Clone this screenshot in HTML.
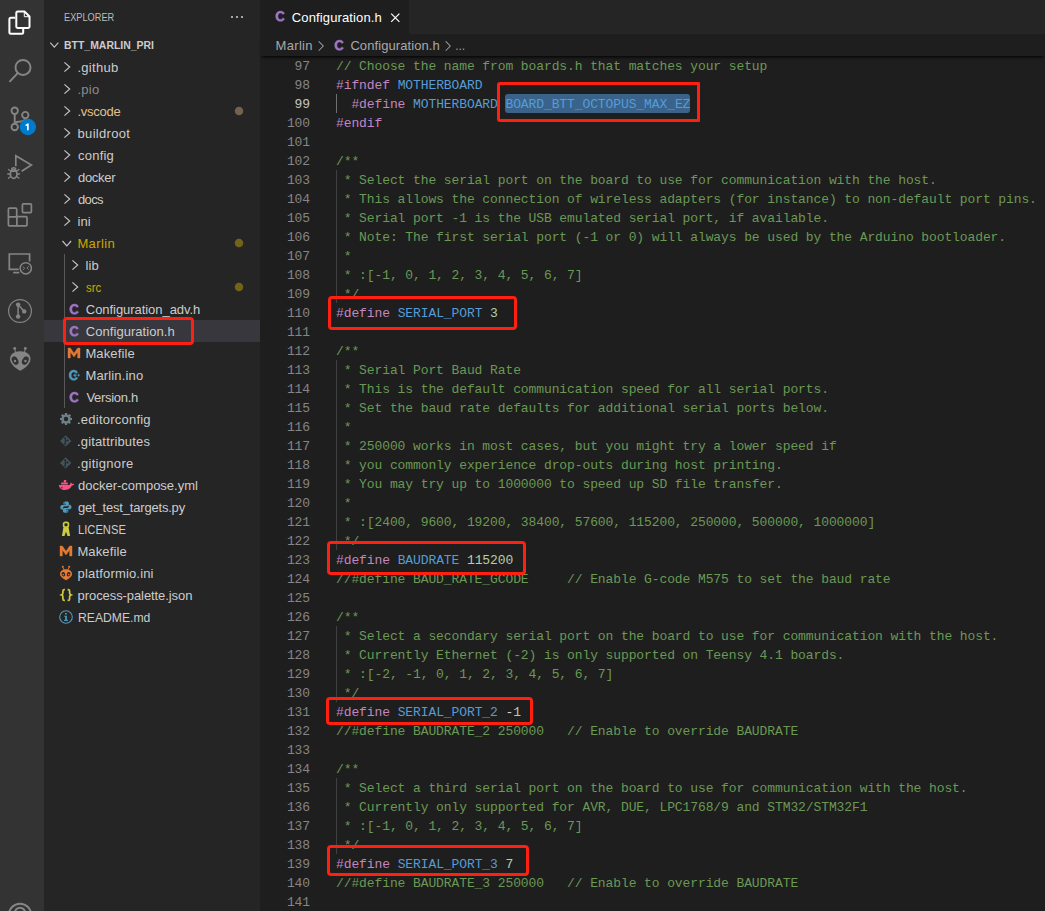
<!DOCTYPE html>
<html><head><meta charset="utf-8"><title>Configuration.h</title>
<style>
*{box-sizing:border-box;margin:0;padding:0}
html,body{width:1045px;height:911px;overflow:hidden;background:#1e1e1e}
body{position:relative;font-family:"Liberation Sans",sans-serif;font-size:13px;color:#cccccc}
.act{position:absolute;left:0;top:0;width:44px;height:911px;background:#333333}
.act svg{position:absolute;left:0;top:0}
.side{position:absolute;left:44px;top:0;width:216px;height:911px;background:#252526;overflow:hidden}
.hdr{position:absolute;left:19.500px;top:10px;font-size:11px;line-height:14px;color:#bbbbbb;white-space:nowrap;transform:scaleX(0.838);transform-origin:0 50%}
.more{position:absolute;left:185px;top:9px;width:16px;height:16px}
.row{position:absolute;left:0;width:216px;height:22px;line-height:22px;white-space:nowrap}
.row.selrow{background:#37373d}
.lbl{position:absolute;top:1px;color:#cccccc;font-size:13px;display:inline-block}
.lbl.root{font-weight:bold;font-size:11px;letter-spacing:0;color:#cccccc;top:0}
.lbl.dim{color:#8c8c8c}
.lbl.mod{color:#e2c08d}
.lbl.mod2{color:#cca700}
.ic{position:absolute;top:3px;width:16px;height:16px}
.ic svg{display:block;width:16px;height:16px}
.dot{position:absolute;left:186px;top:2px;width:18px;height:18px}
.guide{position:absolute;left:20px;top:254px;width:1px;height:154px;background:#585858}
.tabs{position:absolute;left:260px;top:0;width:785px;height:34px;background:#252526}
.tab{position:absolute;left:0;top:0;width:149px;height:34px;background:#1e1e1e}
.tab .tt{position:absolute;left:31.800px;top:0;line-height:35px;color:#ffffff;font-size:13px;letter-spacing:0.13px;white-space:nowrap}
.bc{position:absolute;left:260px;top:34px;width:785px;height:22px;background:#1e1e1e;line-height:22px;color:#a9a9a9;white-space:nowrap;box-shadow:0 3px 3px -2px #000}
.bc span{position:absolute;top:1px;letter-spacing:0.08px}
.ed{position:absolute;left:0;top:0;width:1045px;height:911px;pointer-events:none}
.ln,.cl{position:absolute;height:19px;line-height:19px;font-family:"Liberation Mono",monospace;font-size:13px;white-space:pre}
.ln{left:260px;width:50px;text-align:right;color:#858585;letter-spacing:-0.1px}
.ln.cur{color:#c6c6c6}
.cl{left:336px;color:#d4d4d4;letter-spacing:-0.1px}
.c{color:#6a9955}.p{color:#c586c0}.b{color:#569cd6}.n{color:#b5cea8}.w{color:#d4d4d4}
.sel{color:#569cd6;position:relative;display:inline-block;height:19px;line-height:19px}
.sel::before{content:'';position:absolute;left:-0.4px;right:-0.2px;top:-1px;height:19px;background:#3a638c;border-radius:3px;z-index:-1}
.ed{z-index:0}
.ig{position:absolute;left:336px;width:1px;height:19px;background:#404040}
.ig.ga{background:#707070}
.rb{position:absolute;border:3px solid #ff2011}
</style></head><body>
<div class="act">
<svg width="44" height="911" viewBox="0 0 44 911" fill="none" stroke-linecap="butt" stroke-linejoin="round">
<!-- files (active, white) -->
<g stroke="#ffffff" stroke-width="2">
<path d="M17.800 11.500H24.500L29.500 16.500V26.500a1.500 1.500 0 0 1 -1.500 1.500H17.800a1.500 1.500 0 0 1 -1.500 -1.500V13a1.500 1.500 0 0 1 1.500 -1.500z"/>
<path d="M15.300 17.800H10.900a1.500 1.500 0 0 0 -1.500 1.500V32.200a1.500 1.500 0 0 0 1.500 1.500H21.700a1.500 1.500 0 0 0 1.500 -1.500V29"/>
</g>
<path d="M24.300 11.800V16.700H29.300" stroke="#ffffff" stroke-width="1"/>
<!-- search -->
<g stroke="#858585" stroke-width="2">
<circle cx="23" cy="67.400" r="7.500"/>
<path d="M17.900 72.900L9.500 81.900"/>
</g>
<!-- source control -->
<g stroke="#858585" stroke-width="1.900">
<circle cx="14.700" cy="110.700" r="3.200"/>
<circle cx="14.700" cy="127" r="3.200"/>
<circle cx="25.300" cy="115.100" r="3.200"/>
<path d="M14.700 113.700V124"/>
<path d="M25.300 118.100c0 3.200 -3.600 3.600 -6.600 3.600c-2.400 0 -4 .8 -4 2.600"/>
</g>
<circle cx="27.900" cy="127" r="8.200" fill="#007acc"/>
<path d="M28.700 123.400v6.800h-1.700v-4.800l-1.500.8v-1.500l1.900-1.300z" fill="#ffffff"/>
<!-- run and debug -->
<g stroke="#858585" stroke-width="1.700">
<path d="M15.800 166.200V155.700L31.400 165L21.600 171.200" stroke-linejoin="miter"/>
<ellipse cx="13.700" cy="174" rx="3.300" ry="4.300"/>
<path d="M10.600 171.200h6.200" />
<path d="M10.400 174H7.300M17 174h3.100M10.700 176.600L8 178.600M16.700 176.600l2.700 2M10.900 171.300L8.100 169.200M16.500 171.300l2.800-2.100" stroke-width="1.300"/>
<path d="M11.600 169.800a2.100 2.100 0 0 1 4.200 0" stroke-width="1.400"/>
</g>
<!-- extensions -->
<g stroke="#858585" stroke-width="1.700">
<path d="M9.400 208.200H15.700a1 1 0 0 1 1 1V216.700H26a1 1 0 0 1 1 1V224.800a1 1 0 0 1 -1 1H9.400a1 1 0 0 1 -1 -1V209.200a1 1 0 0 1 1 -1z"/>
<path d="M8.400 216.900H16.700M16.900 216.700V225.800"/>
<rect x="22.400" y="203.800" width="9" height="8.800" rx="1"/>
</g>
<!-- remote explorer -->
<g stroke="#858585" stroke-width="1.700" stroke-linejoin="miter">
<path d="M29.600 261.500V254H9.300V269.300H18.700"/>
<path d="M13.200 272.600H19.300"/>
<circle cx="25.800" cy="268.300" r="5.600" stroke-width="1.500"/>
<path d="M22.900 266.600l1.700 1.700-1.700 1.700M28.700 266.200l-1.700 1.700 1.700 1.700" stroke-width="1"/>
</g>
<!-- git graph -->
<circle cx="20" cy="311" r="11.400" stroke="#858585" stroke-width="1.200"/>
<path d="M18.100 304.600V316.600M18.100 304.600L24.200 311.400" stroke="#858585" stroke-width="1.500"/>
<circle cx="18.100" cy="304.600" r="2.200" fill="#858585"/><circle cx="18.100" cy="316.600" r="2.200" fill="#858585"/><circle cx="24.200" cy="311.400" r="2.200" fill="#858585"/>
<!-- platformio alien -->
<g fill="#858585">
<circle cx="14.700" cy="348.500" r="1.400"/><circle cx="25.300" cy="348.500" r="1.400"/>
<path d="M14.500 348.700l1.300 4.300M25.500 348.700l-1.300 4.300" stroke="#858585" stroke-width="1"/>
<path d="M20.200 351.200c6.400 0 10.300 3.300 10.300 7.800 0 4.600 -5.300 9.300 -10.300 11.700 -5 -2.400 -10.200 -7.100 -10.200 -11.700 0 -4.500 3.800 -7.800 10.200 -7.800z"/>
</g>
<ellipse cx="15.100" cy="360.600" rx="3" ry="4.500" transform="rotate(-28 15.100 360.600)" fill="#333333"/>
<ellipse cx="25.300" cy="360.600" rx="3" ry="4.500" transform="rotate(28 25.300 360.600)" fill="#333333"/>
<circle cx="15" cy="361" r="1.200" fill="#858585"/><circle cx="25.400" cy="361" r="1.200" fill="#858585"/>
<!-- account (cropped) -->
<g stroke="#858585" stroke-width="2">
<circle cx="20" cy="915" r="11.200"/>
<circle cx="20" cy="913" r="5.200"/>
</g>
</svg>

</div>
<div class="side">
<div class="hdr">EXPLORER</div>
<svg class="more" viewBox="0 0 16 16"><circle cx="3" cy="8" r="1.100" fill="#c5c5c5"/><circle cx="8" cy="8" r="1.100" fill="#c5c5c5"/><circle cx="13" cy="8" r="1.100" fill="#c5c5c5"/></svg>
<div class="row" style="top:34px"><span class="ic" style="left:2.600px;top:3.400px;width:15px;height:15px"><svg class="chev" style="width:15px;height:15px" viewBox="0 0 16 16"><path d="M3.500 6L7.800 10.900 12.100 6" stroke="#c5c5c5" stroke-width="1.150" fill="none"/></svg></span><span class="lbl root" style="left:20px;letter-spacing:0px;transform:scaleX(0.95);transform-origin:0 50%">BTT_MARLIN_PRI</span></div><div class="row" style="top:56px"><span class="ic" style="left:15px"><svg class="chev" viewBox="0 0 16 16"><path d="M5.400 3.400L10.700 8 5.400 12.600" stroke="#c5c5c5" stroke-width="1.150" fill="none"/></svg></span><span class="lbl " style="left:33.4px;letter-spacing:0.3px">.github</span></div><div class="row" style="top:78px"><span class="ic" style="left:15px"><svg class="chev" viewBox="0 0 16 16"><path d="M5.400 3.400L10.700 8 5.400 12.600" stroke="#c5c5c5" stroke-width="1.150" fill="none"/></svg></span><span class="lbl dim" style="left:33.4px;letter-spacing:0.29px">.pio</span></div><div class="row" style="top:100px"><span class="ic" style="left:15px"><svg class="chev" viewBox="0 0 16 16"><path d="M5.400 3.400L10.700 8 5.400 12.600" stroke="#c5c5c5" stroke-width="1.150" fill="none"/></svg></span><span class="lbl mod" style="left:33.4px;letter-spacing:-0.23px">.vscode</span><svg class="dot" viewBox="0 0 18 18"><circle cx="9" cy="9" r="4.250" fill="#716350"/></svg></div><div class="row" style="top:122px"><span class="ic" style="left:15px"><svg class="chev" viewBox="0 0 16 16"><path d="M5.400 3.400L10.700 8 5.400 12.600" stroke="#c5c5c5" stroke-width="1.150" fill="none"/></svg></span><span class="lbl " style="left:33.6px;letter-spacing:0.29px">buildroot</span></div><div class="row" style="top:144px"><span class="ic" style="left:15px"><svg class="chev" viewBox="0 0 16 16"><path d="M5.400 3.400L10.700 8 5.400 12.600" stroke="#c5c5c5" stroke-width="1.150" fill="none"/></svg></span><span class="lbl " style="left:34px;letter-spacing:0.23px">config</span></div><div class="row" style="top:166px"><span class="ic" style="left:15px"><svg class="chev" viewBox="0 0 16 16"><path d="M5.400 3.400L10.700 8 5.400 12.600" stroke="#c5c5c5" stroke-width="1.150" fill="none"/></svg></span><span class="lbl " style="left:34px;letter-spacing:-0.3px">docker</span></div><div class="row" style="top:188px"><span class="ic" style="left:15px"><svg class="chev" viewBox="0 0 16 16"><path d="M5.400 3.400L10.700 8 5.400 12.600" stroke="#c5c5c5" stroke-width="1.150" fill="none"/></svg></span><span class="lbl " style="left:34px;letter-spacing:-0.65px">docs</span></div><div class="row" style="top:210px"><span class="ic" style="left:15px"><svg class="chev" viewBox="0 0 16 16"><path d="M5.400 3.400L10.700 8 5.400 12.600" stroke="#c5c5c5" stroke-width="1.150" fill="none"/></svg></span><span class="lbl " style="left:33.6px;letter-spacing:0.04px">ini</span></div><div class="row" style="top:232px"><span class="ic" style="left:15px"><svg class="chev" viewBox="0 0 16 16"><path d="M3.500 6L7.800 10.900 12.100 6" stroke="#c5c5c5" stroke-width="1.150" fill="none"/></svg></span><span class="lbl mod2" style="left:33.4px;letter-spacing:0.37px">Marlin</span><svg class="dot" viewBox="0 0 18 18"><circle cx="9" cy="9" r="4.250" fill="#73631a"/></svg></div><div class="row" style="top:254px"><span class="ic" style="left:23px"><svg class="chev" viewBox="0 0 16 16"><path d="M5.400 3.400L10.700 8 5.400 12.600" stroke="#c5c5c5" stroke-width="1.150" fill="none"/></svg></span><span class="lbl " style="left:41.6px;letter-spacing:0.11px">lib</span></div><div class="row" style="top:276px"><span class="ic" style="left:23px"><svg class="chev" viewBox="0 0 16 16"><path d="M5.400 3.400L10.700 8 5.400 12.600" stroke="#c5c5c5" stroke-width="1.150" fill="none"/></svg></span><span class="lbl mod2" style="left:42.4px;letter-spacing:0px;transform:scaleX(0.875);transform-origin:0 50%">src</span><svg class="dot" viewBox="0 0 18 18"><circle cx="9" cy="9" r="4.250" fill="#73631a"/></svg></div><div class="row" style="top:298px"><span class="ic" style="left:22px"><svg class="fi" viewBox="0 0 16 16"><path d="M12.6 10.9c-.8 1.5-2.3 2.4-4.2 2.4-2.8 0-4.7-2.1-4.7-5.1 0-3 1.900-5.100 4.700-5.100 1.900 0 3.300.8 4.100 2.300l-1.800 1c-.5-.9-1.200-1.400-2.300-1.400-1.500 0-2.500 1.300-2.500 3.200 0 1.900 1 3.200 2.500 3.200 1.100 0 1.900-.5 2.400-1.500z" fill="#a074c4" stroke="#a074c4" stroke-width=".45"/></svg></span><span class="lbl " style="left:41.8px;letter-spacing:-0.05px">Configuration_adv.h</span></div><div class="row selrow" style="top:320px"><span class="ic" style="left:22px"><svg class="fi" viewBox="0 0 16 16"><path d="M12.6 10.9c-.8 1.5-2.3 2.4-4.2 2.4-2.8 0-4.7-2.1-4.7-5.1 0-3 1.900-5.100 4.700-5.100 1.900 0 3.300.8 4.100 2.300l-1.800 1c-.5-.9-1.200-1.400-2.300-1.400-1.500 0-2.500 1.300-2.500 3.200 0 1.900 1 3.200 2.500 3.200 1.100 0 1.900-.5 2.400-1.500z" fill="#a074c4" stroke="#a074c4" stroke-width=".45"/></svg></span><span class="lbl " style="left:41.8px;letter-spacing:0.05px">Configuration.h</span></div><div class="row" style="top:342px"><span class="ic" style="left:22px"><svg class="fi" viewBox="0 0 16 16"><path d="M2 13V3h2.400L8 8.200 11.600 3H14v10h-2.400V7L8 12 4.400 7v6z" fill="#e37933" stroke="#e37933" stroke-width=".4"/></svg></span><span class="lbl " style="left:41.4px;letter-spacing:0.12px">Makefile</span></div><div class="row" style="top:364px"><span class="ic" style="left:22px"><svg class="fi" viewBox="0 0 16 16"><path d="M11.800 10.900c-.8 1.500-2.200 2.400-4.100 2.400-2.800 0-4.700-2.100-4.700-5.100 0-3 1.900-5.100 4.700-5.100 1.900 0 3.200.8 4 2.300l-1.700 1c-.5-.9-1.200-1.400-2.300-1.400-1.500 0-2.500 1.300-2.500 3.200 0 1.900 1 3.200 2.500 3.200 1.100 0 1.800-.5 2.300-1.500z" fill="#519aba" stroke="#519aba" stroke-width=".4"/><path d="M7.300 7.700h1.200V6.500h1v1.200h1.200v1H9.500v1.200h-1V8.700H7.300z M11.300 7.700h.9v-.9h.9v.9h.9v.9h-.9v.9h-.9v-.9h-.9z" fill="#519aba"/></svg></span><span class="lbl " style="left:41.4px;letter-spacing:0.16px">Marlin.ino</span></div><div class="row" style="top:386px"><span class="ic" style="left:22px"><svg class="fi" viewBox="0 0 16 16"><path d="M12.6 10.9c-.8 1.5-2.3 2.4-4.2 2.4-2.8 0-4.7-2.1-4.7-5.1 0-3 1.900-5.100 4.700-5.100 1.900 0 3.300.8 4.100 2.300l-1.800 1c-.5-.9-1.200-1.400-2.300-1.400-1.500 0-2.500 1.300-2.500 3.200 0 1.900 1 3.200 2.500 3.200 1.100 0 1.900-.5 2.400-1.500z" fill="#a074c4" stroke="#a074c4" stroke-width=".45"/></svg></span><span class="lbl " style="left:42.4px;letter-spacing:-0.3px">Version.h</span></div><div class="row" style="top:408px"><span class="ic" style="left:14px"><svg class="fi" viewBox="0 0 16 16"><path fill="#6d8086" fill-rule="evenodd" d="M7 2h2l.3 1.600 1 .4 1.300-.9 1.400 1.400-.9 1.300.4 1 1.500.2v2l-1.600.3-.4 1 .9 1.300-1.400 1.400-1.300-.9-1 .4L9 14H7l-.3-1.600-1-.4-1.300.9L3 11.500l.9-1.300-.4-1L2 9V7l1.600-.3.400-1-.9-1.300L4.500 3l1.300.9 1-.4zM8 5.800a2.200 2.200 0 100 4.400 2.200 2.200 0 000-4.400z"/></svg></span><span class="lbl " style="left:33px;letter-spacing:0.23px">.editorconfig</span></div><div class="row" style="top:430px"><span class="ic" style="left:14px"><svg class="fi" viewBox="0 0 16 16"><path d="M7.700 2.200l5.700 5.700-5.700 5.700L2 7.900z" fill="#41535b"/><path d="M7.200 5v6M7.400 8.600L9.600 7.200" stroke="#252526" stroke-width="1" fill="none"/><circle cx="7.200" cy="5.200" r=".9" fill="#252526"/><circle cx="9.700" cy="7.400" r=".9" fill="#252526"/><circle cx="7.200" cy="10.800" r=".9" fill="#252526"/></svg></span><span class="lbl " style="left:33px;letter-spacing:0.16px">.gitattributes</span></div><div class="row" style="top:452px"><span class="ic" style="left:14px"><svg class="fi" viewBox="0 0 16 16"><path d="M7.700 2.200l5.700 5.700-5.700 5.700L2 7.900z" fill="#41535b"/><path d="M7.200 5v6M7.400 8.600L9.600 7.200" stroke="#252526" stroke-width="1" fill="none"/><circle cx="7.200" cy="5.200" r=".9" fill="#252526"/><circle cx="9.700" cy="7.400" r=".9" fill="#252526"/><circle cx="7.200" cy="10.800" r=".9" fill="#252526"/></svg></span><span class="lbl " style="left:33px;letter-spacing:0.31px">.gitignore</span></div><div class="row" style="top:474px"><span class="ic" style="left:14px"><svg class="fi" viewBox="0 0 16 16" style="overflow:visible"><path fill="#f55385" d="M0.800 7.900H11.500C12.200 7.400 12.500 6.400 12.600 5.600C13.500 5.900 14 6.400 14.200 7C14.900 6.600 15.700 6.600 16.200 6.900C15.900 7.900 15 8.500 13.900 8.600C13 11.300 10.500 13 7 13C3.500 13 1.200 11 0.800 7.900Z"/><path fill="#f55385" d="M3.200 5.500h6.600v2.100H3.200zM5.800 3h2.400v2.200H5.800z"/><circle cx="3.900" cy="10.700" r=".7" fill="#252526"/></svg></span><span class="lbl " style="left:34px;letter-spacing:0px">docker-compose.yml</span></div><div class="row" style="top:496px"><span class="ic" style="left:14px"><svg class="fi" viewBox="-0.500 -0.700 17.200 17.200"><path fill="#519aba" d="M7.900 2C5.600 2 5.400 3 5.400 3.600v1.500h2.700v.6H3.900C2.700 5.700 2 6.700 2 8.100c0 1.500.7 2.500 1.800 2.500h1.100V9c0-1.200 1-2 2-2h2.700c.9 0 1.600-.7 1.600-1.600V3.600c0-.9-.900-1.600-1.900-1.600zM6.700 3a.6.600 0 110 1.200.6.600 0 010-1.200z"/><path fill="#519aba" d="M8.100 14c2.300 0 2.500-1 2.500-1.600v-1.500H7.900v-.6h4.200c1.200 0 1.900-1 1.900-2.400 0-1.500-.7-2.500-1.800-2.500h-1.100V7c0 1.200-1 2-2 2H6.400c-.9 0-1.600.7-1.600 1.600v1.800c0 .9.900 1.600 1.900 1.600zM9.300 13a.6.600 0 110-1.200.6.600 0 010 1.200z"/></svg></span><span class="lbl " style="left:34px;letter-spacing:-0.19px">get_test_targets.py</span></div><div class="row" style="top:518px"><span class="ic" style="left:14px"><svg class="fi" viewBox="0 0 16 16"><rect x="5.600" y="1.300" width="4.800" height="4.800" rx="1.800" fill="none" stroke="#cbcb41" stroke-width="1.700"/><path fill="#cbcb41" d="M5.400 6.200h5.200l1.500 8.700H9.500L8 10.800 6.500 14.900H3.900z"/></svg></span><span class="lbl " style="left:34px;letter-spacing:0px;transform:scaleX(0.86);transform-origin:0 50%">LICENSE</span></div><div class="row" style="top:540px"><span class="ic" style="left:14px"><svg class="fi" viewBox="0 0 16 16"><path d="M2 13V3h2.400L8 8.200 11.600 3H14v10h-2.400V7L8 12 4.400 7v6z" fill="#e37933" stroke="#e37933" stroke-width=".4"/></svg></span><span class="lbl " style="left:33.4px;letter-spacing:0.12px">Makefile</span></div><div class="row" style="top:562px"><span class="ic" style="left:14px"><svg class="fi" viewBox="0 0 16 16"><circle cx="4.800" cy="1.800" r="1" fill="#e37933"/><circle cx="11.200" cy="1.800" r="1" fill="#e37933"/><path d="M4.900 2.300l1.200 2.600M11.100 2.300L9.900 4.900" stroke="#e37933" stroke-width=".9"/><path fill="#e37933" d="M8 4.200c3.800 0 6 2.200 6 4.800 0 2.600-3.500 5-6 6.200C5.500 14 2 11.600 2 9c0-2.600 2.200-4.800 6-4.800z"/><ellipse cx="5.400" cy="9.200" rx="1.700" ry="2.200" transform="rotate(-25 5.400 9.200)" fill="#252526"/><ellipse cx="10.600" cy="9.200" rx="1.700" ry="2.200" transform="rotate(25 10.600 9.200)" fill="#252526"/><circle cx="5.300" cy="9.600" r=".8" fill="#e37933"/><circle cx="10.700" cy="9.600" r=".8" fill="#e37933"/></svg></span><span class="lbl " style="left:33.6px;letter-spacing:0.17px">platformio.ini</span></div><div class="row" style="top:584px"><span class="ic" style="left:14px"><svg class="fi" viewBox="0 0 16 16"><path fill="none" stroke="#cbcb41" stroke-width="1.700" d="M6.900 2.600H6.300c-.9 0-1.400.5-1.400 1.400v2.100c0 .9-.5 1.500-1.300 1.800.8.300 1.300.9 1.300 1.800v2.300c0 .9.500 1.400 1.400 1.400h.6M9.600 2.600h.6c.9 0 1.400.5 1.400 1.400v2.100c0 .9.500 1.500 1.300 1.800-.8.300-1.300.9-1.300 1.800v2.300c0 .9-.5 1.400-1.400 1.400h-.6"/></svg></span><span class="lbl " style="left:33.6px;letter-spacing:-0.08px">process-palette.json</span></div><div class="row" style="top:606px"><span class="ic" style="left:14px"><svg class="fi" viewBox="0 0 16 16"><circle cx="8" cy="8" r="6.300" fill="none" stroke="#519aba" stroke-width="1.100"/><path fill="#519aba" d="M7.100 3.900h1.700v1.600H7.100zM6.300 6.700h2.600v4.100h.9v1.100H6.200v-1.100h1V7.800h-.9z"/></svg></span><span class="lbl " style="left:33.8px;letter-spacing:0px;transform:scaleX(0.935);transform-origin:0 50%">README.md</span></div>
<div class="guide"></div>
</div>
<div class="tabs"><div class="tab"><span class="ic" style="left:12px;top:8px"><svg class="fi" viewBox="0 0 16 16"><path d="M12.6 10.9c-.8 1.5-2.3 2.4-4.2 2.4-2.8 0-4.7-2.1-4.7-5.1 0-3 1.900-5.100 4.700-5.100 1.900 0 3.300.8 4.100 2.300l-1.800 1c-.5-.9-1.200-1.400-2.300-1.400-1.500 0-2.500 1.300-2.500 3.200 0 1.900 1 3.200 2.500 3.200 1.100 0 1.900-.5 2.400-1.500z" fill="#a074c4" stroke="#a074c4" stroke-width=".45"/></svg></span><span class="tt">Configuration.h</span>
<svg style="position:absolute;left:127px;top:9px" width="16" height="16" viewBox="0 0 16 16"><path d="M4.200 4.600L12.400 12.800M12.400 4.600L4.200 12.800" stroke="#ffffff" stroke-width="1.200" fill="none"/></svg></div></div>
<div class="bc"><span style="left:15.600px;letter-spacing:0.3px">Marlin</span><span style="left:53.600px;top:5px;height:14px"><svg width="14" height="14" viewBox="0 0 16 16" style="display:block"><path d="M5.700 13.700l5.700-5.700-5.700-5.700-.7.700 5 5-5 5z" fill="#a9a9a9"/></svg></span><span style="left:71px;top:3px;height:16px"><svg width="16" height="16" style="display:block" viewBox="0 0 16 16"><path d="M12.6 10.9c-.8 1.5-2.3 2.4-4.2 2.4-2.8 0-4.7-2.1-4.7-5.1 0-3 1.900-5.100 4.700-5.100 1.900 0 3.300.8 4.100 2.300l-1.800 1c-.5-.9-1.200-1.400-2.300-1.400-1.500 0-2.500 1.300-2.500 3.200 0 1.900 1 3.200 2.500 3.200 1.100 0 1.900-.5 2.400-1.500z" fill="#a074c4" stroke="#a074c4" stroke-width=".45"/></svg></span><span style="left:90.400px">Configuration.h</span><span style="left:180.600px;top:5px;height:14px"><svg width="14" height="14" viewBox="0 0 16 16" style="display:block"><path d="M5.700 13.700l5.700-5.700-5.700-5.700-.7.700 5 5-5 5z" fill="#a9a9a9"/></svg></span><span style="left:194.800px;transform:scaleX(0.8);transform-origin:0 50%">…</span></div>
<div class="ed">
<div class="ln" style="top:57px">97</div><div class="cl" style="top:57px"><span class="c">// Choose the name from boards.h that matches your setup</span></div><div class="ln" style="top:76px">98</div><div class="cl" style="top:76px"><span class="p">#ifndef</span><span class="w"> </span><span class="b">MOTHERBOARD</span></div><div class="ln cur" style="top:95px">99</div><div class="cl" style="top:95px"><span class="w">  </span><span class="p">#define</span><span class="w"> </span><span class="b">MOTHERBOARD</span><span class="w"> </span><span class="sel">BOARD_BTT_OCTOPUS_MAX_EZ</span></div><div class="ig ga" style="top:94px"></div><div class="ln" style="top:114px">100</div><div class="cl" style="top:114px"><span class="p">#endif</span></div><div class="ln" style="top:133px">101</div><div class="cl" style="top:133px"></div><div class="ln" style="top:152px">102</div><div class="cl" style="top:152px"><span class="c">/**</span></div><div class="ln" style="top:171px">103</div><div class="cl" style="top:171px"><span class="c"> * Select the serial port on the board to use for communication with the host.</span></div><div class="ig" style="top:170px"></div><div class="ln" style="top:190px">104</div><div class="cl" style="top:190px"><span class="c"> * This allows the connection of wireless adapters (for instance) to non-default port pins.</span></div><div class="ig" style="top:189px"></div><div class="ln" style="top:209px">105</div><div class="cl" style="top:209px"><span class="c"> * Serial port -1 is the USB emulated serial port, if available.</span></div><div class="ig" style="top:208px"></div><div class="ln" style="top:228px">106</div><div class="cl" style="top:228px"><span class="c"> * Note: The first serial port (-1 or 0) will always be used by the Arduino bootloader.</span></div><div class="ig" style="top:227px"></div><div class="ln" style="top:247px">107</div><div class="cl" style="top:247px"><span class="c"> *</span></div><div class="ig" style="top:246px"></div><div class="ln" style="top:266px">108</div><div class="cl" style="top:266px"><span class="c"> * :[-1, 0, 1, 2, 3, 4, 5, 6, 7]</span></div><div class="ig" style="top:265px"></div><div class="ln" style="top:285px">109</div><div class="cl" style="top:285px"><span class="c"> */</span></div><div class="ig" style="top:284px"></div><div class="ln" style="top:304px">110</div><div class="cl" style="top:304px"><span class="p">#define</span><span class="w"> </span><span class="b">SERIAL_PORT</span><span class="w"> </span><span class="n">3</span></div><div class="ln" style="top:323px">111</div><div class="cl" style="top:323px"></div><div class="ln" style="top:342px">112</div><div class="cl" style="top:342px"><span class="c">/**</span></div><div class="ln" style="top:361px">113</div><div class="cl" style="top:361px"><span class="c"> * Serial Port Baud Rate</span></div><div class="ig" style="top:360px"></div><div class="ln" style="top:380px">114</div><div class="cl" style="top:380px"><span class="c"> * This is the default communication speed for all serial ports.</span></div><div class="ig" style="top:379px"></div><div class="ln" style="top:399px">115</div><div class="cl" style="top:399px"><span class="c"> * Set the baud rate defaults for additional serial ports below.</span></div><div class="ig" style="top:398px"></div><div class="ln" style="top:418px">116</div><div class="cl" style="top:418px"><span class="c"> *</span></div><div class="ig" style="top:417px"></div><div class="ln" style="top:437px">117</div><div class="cl" style="top:437px"><span class="c"> * 250000 works in most cases, but you might try a lower speed if</span></div><div class="ig" style="top:436px"></div><div class="ln" style="top:456px">118</div><div class="cl" style="top:456px"><span class="c"> * you commonly experience drop-outs during host printing.</span></div><div class="ig" style="top:455px"></div><div class="ln" style="top:475px">119</div><div class="cl" style="top:475px"><span class="c"> * You may try up to 1000000 to speed up SD file transfer.</span></div><div class="ig" style="top:474px"></div><div class="ln" style="top:494px">120</div><div class="cl" style="top:494px"><span class="c"> *</span></div><div class="ig" style="top:493px"></div><div class="ln" style="top:513px">121</div><div class="cl" style="top:513px"><span class="c"> * :[2400, 9600, 19200, 38400, 57600, 115200, 250000, 500000, 1000000]</span></div><div class="ig" style="top:512px"></div><div class="ln" style="top:532px">122</div><div class="cl" style="top:532px"><span class="c"> */</span></div><div class="ig" style="top:531px"></div><div class="ln" style="top:551px">123</div><div class="cl" style="top:551px"><span class="p">#define</span><span class="w"> </span><span class="b">BAUDRATE</span><span class="w"> </span><span class="n">115200</span></div><div class="ln" style="top:570px">124</div><div class="cl" style="top:570px"><span class="c">//#define BAUD_RATE_GCODE     // Enable G-code M575 to set the baud rate</span></div><div class="ln" style="top:589px">125</div><div class="cl" style="top:589px"></div><div class="ln" style="top:608px">126</div><div class="cl" style="top:608px"><span class="c">/**</span></div><div class="ln" style="top:627px">127</div><div class="cl" style="top:627px"><span class="c"> * Select a secondary serial port on the board to use for communication with the host.</span></div><div class="ig" style="top:626px"></div><div class="ln" style="top:646px">128</div><div class="cl" style="top:646px"><span class="c"> * Currently Ethernet (-2) is only supported on Teensy 4.1 boards.</span></div><div class="ig" style="top:645px"></div><div class="ln" style="top:665px">129</div><div class="cl" style="top:665px"><span class="c"> * :[-2, -1, 0, 1, 2, 3, 4, 5, 6, 7]</span></div><div class="ig" style="top:664px"></div><div class="ln" style="top:684px">130</div><div class="cl" style="top:684px"><span class="c"> */</span></div><div class="ig" style="top:683px"></div><div class="ln" style="top:703px">131</div><div class="cl" style="top:703px"><span class="p">#define</span><span class="w"> </span><span class="b">SERIAL_PORT_2</span><span class="w"> -</span><span class="n">1</span></div><div class="ln" style="top:722px">132</div><div class="cl" style="top:722px"><span class="c">//#define BAUDRATE_2 250000   // Enable to override BAUDRATE</span></div><div class="ln" style="top:741px">133</div><div class="cl" style="top:741px"></div><div class="ln" style="top:760px">134</div><div class="cl" style="top:760px"><span class="c">/**</span></div><div class="ln" style="top:779px">135</div><div class="cl" style="top:779px"><span class="c"> * Select a third serial port on the board to use for communication with the host.</span></div><div class="ig" style="top:778px"></div><div class="ln" style="top:798px">136</div><div class="cl" style="top:798px"><span class="c"> * Currently only supported for AVR, DUE, LPC1768/9 and STM32/STM32F1</span></div><div class="ig" style="top:797px"></div><div class="ln" style="top:817px">137</div><div class="cl" style="top:817px"><span class="c"> * :[-1, 0, 1, 2, 3, 4, 5, 6, 7]</span></div><div class="ig" style="top:816px"></div><div class="ln" style="top:836px">138</div><div class="cl" style="top:836px"><span class="c"> */</span></div><div class="ig" style="top:835px"></div><div class="ln" style="top:855px">139</div><div class="cl" style="top:855px"><span class="p">#define</span><span class="w"> </span><span class="b">SERIAL_PORT_3</span><span class="w"> </span><span class="n">7</span></div><div class="ln" style="top:874px">140</div><div class="cl" style="top:874px"><span class="c">//#define BAUDRATE_3 250000   // Enable to override BAUDRATE</span></div><div class="ln" style="top:893px">141</div><div class="cl" style="top:893px"></div>
<div class="rb" style="left:497px;top:82px;width:203px;height:40px;border-radius:3px 1px 1px 3px"></div><div class="rb" style="left:328px;top:296px;width:189px;height:34px;border-radius:4px"></div><div class="rb" style="left:327px;top:541px;width:199px;height:34px;border-radius:4px"></div><div class="rb" style="left:326px;top:697px;width:207px;height:28px;border-radius:4px"></div><div class="rb" style="left:327px;top:845px;width:202px;height:31px;border-radius:4px"></div><div class="rb" style="left:63px;top:317px;width:131px;height:28px;border-radius:4px"></div>
</div>
</body></html>
